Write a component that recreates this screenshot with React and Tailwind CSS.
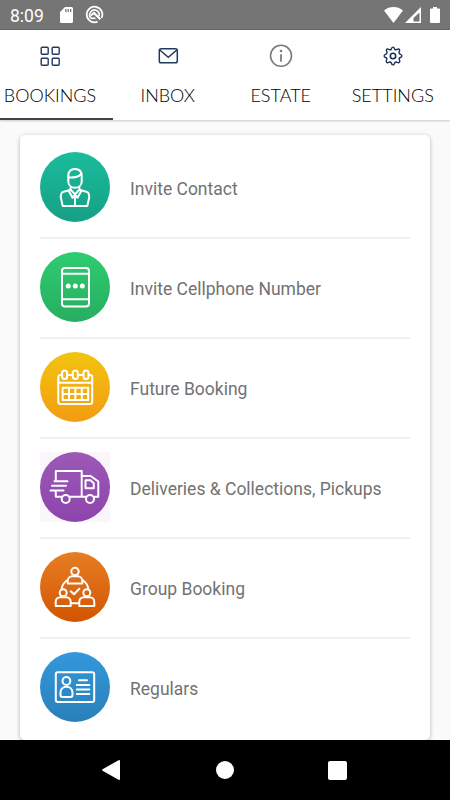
/**
 * App.jsx
 *
 * Bookings screen of the visitor app:
 *   - Android status bar
 *   - top tabs (bookings, inbox, estate, settings)
 *   - list of booking types
 *   - Android navigation bar
 */

import React from "react";

/* ── Status bar ──────────────────────────────────────────────── */
const StatusBar = () => (
  <div className="flex h-[30px] shrink-0 items-center border-b border-[#686868] bg-[#757575] px-[10px] text-white">
    <span className="w-[35px] pt-[2px] text-[17.5px] leading-[28px]">8:09</span>
    <svg className="ml-[15px]" width="13" height="16" viewBox="0 0 13 16" fill="currentColor">
      <path
        fillRule="evenodd"
        d="M5 0h6.5A1.5 1.5 0 0 1 13 1.5v13a1.5 1.5 0 0 1-1.5 1.5h-10A1.5 1.5 0 0 1 0 14.500V5Zm.2 2v3h1.300V2Zm2.400 0v3h1.300V2Zm2.400 0v3h1.300V2Z"
      />
    </svg>
    <svg className="ml-[12px]" width="19" height="19" viewBox="0 0 19 19" fill="none" stroke="currentColor">
      <path d="M12.500 16.700A7.800 7.800 0 1 1 16.600 12.800" strokeWidth="1.800" />
      <path d="M6.200 13.200a4.700 4.700 0 1 1 7.700-2" strokeWidth="1.600" />
      <path d="M5.800 10.500 9 7.900l6.300 6.300" strokeWidth="2.200" />
      <path d="M6 13.300h4.500" strokeWidth="1.600" />
    </svg>
    <div className="ml-auto flex items-center">
      <svg width="19" height="16" viewBox="0 0 19 16" fill="currentColor">
        <path d="M0 3.500C5.500-1.100 13.500-1.100 19 3.500L9.500 16Z" />
      </svg>
      <svg className="ml-[2px]" width="16" height="16" viewBox="0 0 16 16">
        <path fillRule="evenodd" fill="currentColor" d="M16 0v16H0ZM14.500 5.500 8.500 11v3.500h6Z" />
      </svg>
      <svg className="ml-[9px]" width="10" height="16" viewBox="0 0 10 16" fill="currentColor">
        <path d="M3 0h4v1.600h2a1 1 0 0 1 1 1V15a1 1 0 0 1-1 1H1a1 1 0 0 1-1-1V2.600a1 1 0 0 1 1-1h2Z" />
      </svg>
    </div>
  </div>
);

/* ── Tab icons ───────────────────────────────────────────────── */
const GridIcon = () => (
  <svg width="24" height="24" viewBox="0 0 24 24" fill="none" stroke="#1f3a5c" strokeWidth="1.400">
    <rect x="3.200" y="3.200" width="7" height="7" rx="1" />
    <rect x="14.200" y="3.200" width="7" height="7" rx="1" />
    <rect x="3.200" y="14.200" width="7" height="7" rx="1" />
    <rect x="14.200" y="14.200" width="7" height="7" rx="1" />
  </svg>
);

const MailIcon = () => (
  <svg width="24" height="24" viewBox="0 0 24 24" fill="none" stroke="#1f3a5c" strokeWidth="1.500">
    <rect x="3.300" y="4.800" width="18" height="14" rx="1.800" />
    <path d="m3.800 6 8.500 7.200L20.800 6" />
  </svg>
);

const InfoIcon = () => (
  <svg width="24" height="24" viewBox="0 0 24 24" fill="none" stroke="#7c7c7c" strokeWidth="1.600">
    <circle cx="12" cy="11.800" r="10.500" />
    <path d="M12 10.200v7.500" strokeWidth="1.800" />
    <circle cx="12" cy="7" r="1.300" fill="#7c7c7c" stroke="none" />
  </svg>
);

const GearIcon = () => (
  <svg width="24" height="24" viewBox="0 0 24 24" fill="none" stroke="#1a2f55" strokeWidth="1.400">
    {/* eight rounded teeth */}
    <path
      strokeLinejoin="round"
      d="M10.200 5.400C10.700 4.500 10.600 3.100 12 3.100s1.300 1.400 1.800 2.300q.8.700 1.600.2c1-.3 1.900-1.300 2.900-.3s0 1.900-.3 2.900q-.3 1 .6 1.600c.9.500 2.300.8 2.300 2.200s-1.400 1.300-2.300 1.800q-.7.800-.4 1.600c.3 1 1.200 1.900.2 2.900s-2.100 0-3-.3q-.9-.3-1.600.6c-.5.900-.4 2.300-1.800 2.300s-1.300-1.400-1.800-2.300q-.7-.9-1.600-.6c-.9.300-2 1.300-3 .3s-.1-1.900.2-2.900q.3-.8-.4-1.600c-.9-.5-2.300-.4-2.300-1.800s1.400-1.700 2.300-2.200q.9-.6.600-1.600c-.3-1-1.300-1.900-.3-2.900s1.900 0 2.900.3q.8.500 1.600-.2Z"
    />
    <circle cx="12" cy="12" r="2.700" strokeWidth="1.600" />
  </svg>
);

const TABS = [
  { label: "BOOKINGS", Icon: GridIcon, extra: "pr-[12.500px]" },
  { label: "INBOX", Icon: MailIcon, extra: "pr-[2px]" },
  { label: "ESTATE", Icon: InfoIcon, extra: "pr-[1px]" },
  { label: "SETTINGS", Icon: GearIcon, extra: "pr-[2px]" },
];

const Tabs = () => (
  <div className="z-10 flex h-[90px] shrink-0 bg-white shadow-[0_1px_2px_rgba(0,0,0,0.2)]">
    {TABS.map(({ label, Icon, extra }, i) => (
      <button
        key={label}
        className={`flex w-[112.5px] shrink-0 flex-col items-center border-b-2 pt-[14px] font-['Lato',sans-serif] text-[18px] font-light text-black ${extra} ${
          i === 0 ? "border-[#444444]" : "border-transparent"
        }`}
      >
        <Icon />
        <span className="mt-[16px] leading-[22px] whitespace-nowrap">{label}</span>
      </button>
    ))}
  </div>
);

/* ── Row icons, drawn on the 70px disc ───────────────────────── */
const ContactGlyph = () => (
  <>
    <path d="M28.300 24v5.500c0 3.800 3 6.300 6.700 6.300s6.700-2.500 6.700-6.300V24c0-4.500-2.500-7-6.700-7s-6.700 2.500-6.700 7Z" />
    <path d="M28.500 25.500c6 .3 10-.5 12.700-3.500" />
    <path d="M30.500 36v2l-7 1.800a3 3 0 0 0-2.300 2.200l-.5 3 2 9h24.600l2-9-.5-3a3 3 0 0 0-2.300-2.200l-7-1.800v-2" />
    <path d="m28.500 38.500 4 7.300 2.500-3.600 2.500 3.600 4-7.300M30.500 37.500l4.500 4.700 4.500-4.700M35 45v8.500" />
  </>
);

const PhoneGlyph = () => (
  <>
    <rect x="22" y="16" width="27" height="38.500" rx="3" />
    <path d="M22 21.700h27M22 47.300h27" />
    <g fill="#fff" stroke="none">
      <circle cx="28.300" cy="34" r="2.500" />
      <circle cx="35.300" cy="34" r="2.500" />
      <circle cx="42.300" cy="34" r="2.500" />
    </g>
  </>
);

const CalendarGlyph = () => (
  <>
    <path d="M22 23h-1.500a2.200 2.200 0 0 0-2.200 2.200v24.500a2.200 2.200 0 0 0 2.200 2.200h29.500a2.200 2.200 0 0 0 2.200-2.200V25.200A2.200 2.200 0 0 0 50 23h-1.500M27 23h5.500M38 23h5.500" />
    <path d="M18.300 30.700h34" />
    <rect x="22.100" y="18.500" width="5" height="8.600" rx="2.500" />
    <rect x="32.800" y="18.500" width="5" height="8.600" rx="2.500" />
    <rect x="43.500" y="18.500" width="5" height="8.600" rx="2.500" />
    <path d="M22.600 35.700h25.600v12.400H22.600ZM22.600 41.900h25.600M29 35.700v12.400M35.400 35.700v12.400M41.800 35.700v12.400" />
  </>
);

const TruckGlyph = () => (
  <>
    <path d="M15.800 28.500V19H41.700v25.500M15.800 40v4.700h5.700M29.800 44.700h16M41.700 24h9l7.600 5.500v15.200h-4" />
    <path d="M45.500 28.300h5l3.300 3v5h-8.300Z" />
    <circle cx="25.700" cy="47" r="4" />
    <circle cx="50" cy="47" r="4" />
    <path d="M14.500 29.200h13M12 33.800h14M10.500 38.400h13" />
  </>
);

const GroupGlyph = () => (
  <>
    <circle cx="35" cy="19.500" r="3.700" />
    <path d="M27.700 31.500v-2.700a4.500 4.500 0 0 1 4.500-4.500h5.600a4.500 4.500 0 0 1 4.500 4.500v2.700Z" />
    <circle cx="23.200" cy="40.700" r="3.500" />
    <path d="M15.700 54v-4.300a4.500 4.500 0 0 1 4.500-4.500h6a4.500 4.500 0 0 1 4.500 4.500V54Z" />
    <circle cx="46.800" cy="40.700" r="3.500" />
    <path d="M39.300 54v-4.300a4.500 4.500 0 0 1 4.500-4.500h6a4.500 4.500 0 0 1 4.500 4.500V54Z" />
    <path d="M27.500 28c-3.400 2.300-5.500 5.500-6 9.500M42.500 28c3.400 2.300 5.500 5.500 6 9.500M31 51.300h8" />
    <path d="m30.700 39.300 3.300 3 5.300-5.500" />
  </>
);

const CardGlyph = () => (
  <>
    <rect x="15.800" y="20.300" width="38.400" height="29.700" rx="2" />
    <circle cx="26.400" cy="29" r="3.900" />
    <path d="M20.500 43v-2.300c0-3.600 2.500-5.900 6-5.900s6 2.300 6 5.900V43c0 1.200-.7 2-2 2h-8c-1.300 0-2-.8-2-2Z" />
    <path d="M39 28.300h8M36.800 32.900h12.500M36.800 37.400h12.500M36.800 42h12.500" />
  </>
);

const ROWS = [
  { label: "Invite Contact", Glyph: ContactGlyph, color: "from-[#1abc9c] to-[#16a085]" },
  { label: "Invite Cellphone Number", Glyph: PhoneGlyph, color: "from-[#2ecc71] to-[#27ae60]" },
  { label: "Future Booking", Glyph: CalendarGlyph, color: "from-[#f1c40f] to-[#f39c12]" },
  {
    label: "Deliveries & Collections, Pickups",
    Glyph: TruckGlyph,
    color: "from-[#9b59b6] to-[#8e44ad]",
    box: "bg-[#faf6fc]",
  },
  { label: "Group Booking", Glyph: GroupGlyph, color: "from-[#e67e22] to-[#d35400]" },
  { label: "Regulars", Glyph: CardGlyph, color: "from-[#3498db] to-[#2980b9]" },
];

const BookingRow = ({ label, Glyph, color, box = "" }) => (
  <li className="flex h-[100px] items-center border-b-2 border-[#f0f0f4] pb-[2px] last:border-transparent">
    <div className={`size-[70px] shrink-0 ${box}`}>
      <div className={`size-full rounded-full bg-linear-to-b ${color}`}>
        <svg
          width="70"
          height="70"
          viewBox="0 0 70 70"
          fill="none"
          stroke="#fff"
          strokeWidth="2"
          strokeLinecap="round"
          strokeLinejoin="round"
        >
          <Glyph />
        </svg>
      </div>
    </div>
    <span className="ml-5 pt-[4px] text-[17.5px] text-[#727272]">{label}</span>
  </li>
);

/* ── Android navigation bar ──────────────────────────────────── */
const NavBar = () => (
  <div className="z-10 flex h-[60px] shrink-0 items-center bg-black text-white">
    <svg className="ml-[102px]" width="18" height="20" viewBox="0 0 18 20" fill="currentColor">
      <path d="M.6 9.200 16.500.2Q18-.3 18 1v18q0 1.300-1.500.8L.6 10.800Q-.3 10 .6 9.200Z" />
    </svg>
    <div className="ml-[96px] size-[18px] rounded-full bg-white" />
    <div className="ml-[94px] size-[19px] rounded-[2px] bg-white" />
  </div>
);

const App = () => (
  <div className="flex h-[800px] w-[450px] flex-col overflow-hidden bg-[#fafafa] font-['Roboto',sans-serif]">
    <StatusBar />
    <Tabs />
    <main className="min-h-0 flex-1 px-5 pt-[15px]">
      <ul className="h-[605px] rounded-[5px] bg-white px-5 pt-[4px] shadow-[0_1px_4px_rgba(0,0,0,0.28)]">
        {ROWS.map((row) => (
          <BookingRow key={row.label} {...row} />
        ))}
      </ul>
    </main>
    <NavBar />
  </div>
);

export default App;
